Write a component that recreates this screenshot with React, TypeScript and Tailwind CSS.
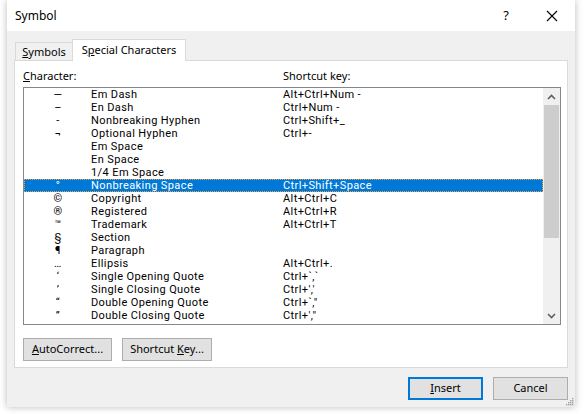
import React from 'react';

type Row = { ch: string; name: string; key: string };

const rows: Row[] = [
  { ch: '—', name: 'Em Dash', key: 'Alt+Ctrl+Num -' },
  { ch: '–', name: 'En Dash', key: 'Ctrl+Num -' },
  { ch: '-', name: 'Nonbreaking Hyphen', key: 'Ctrl+Shift+_' },
  { ch: '¬', name: 'Optional Hyphen', key: 'Ctrl+-' },
  { ch: '', name: 'Em Space', key: '' },
  { ch: '', name: 'En Space', key: '' },
  { ch: '', name: '1/4 Em Space', key: '' },
  { ch: '°', name: 'Nonbreaking Space', key: 'Ctrl+Shift+Space' },
  { ch: '©', name: 'Copyright', key: 'Alt+Ctrl+C' },
  { ch: '®', name: 'Registered', key: 'Alt+Ctrl+R' },
  { ch: '™', name: 'Trademark', key: 'Alt+Ctrl+T' },
  { ch: '§', name: 'Section', key: '' },
  { ch: '¶', name: 'Paragraph', key: '' },
  { ch: '…', name: 'Ellipsis', key: 'Alt+Ctrl+.' },
  { ch: '‘', name: 'Single Opening Quote', key: 'Ctrl+`,`' },
  { ch: '’', name: 'Single Closing Quote', key: "Ctrl+','" },
  { ch: '“', name: 'Double Opening Quote', key: 'Ctrl+`,"' },
  { ch: '”', name: 'Double Closing Quote', key: 'Ctrl+\',"' },
];

const SELECTED = 7;

function Chevron({ up }: { up: boolean }) {
  return (
    <svg width="9" height="6" viewBox="0 0 9 6">
      <path
        d={up ? 'M1 5 L4.5 1.5 L8 5' : 'M1 1 L4.5 4.5 L8 1'}
        fill="none"
        stroke="#606060"
        strokeWidth="1.6"
      />
    </svg>
  );
}

function Btn({ children, w, primary }: { children: React.ReactNode; w: string; primary?: boolean }) {
  return (
    <button
      className={`${w} h-[23px] flex items-center justify-center bg-[#e1e1e1] text-black ${
        primary ? 'border-2 border-[#0078d7]' : 'border border-[#adadad]'
      }`}
    >
      {children}
    </button>
  );
}

export default function App() {
  return (
    <div
      className="w-[584px] h-[414px] bg-white overflow-hidden text-[11px] text-black"
      style={{ fontFamily: '"Segoe UI", "Noto Sans", sans-serif' }}
    >
      <div className="relative ml-[7px] w-[568px] h-[407px] flex flex-col bg-[#f0f0f0] shadow-[0_0_7px_rgba(0,0,0,0.28)]">
        {/* title bar */}
        <div className="h-[31px] bg-white flex items-center pl-[8px]">
          <span className="flex-1 leading-none text-[12px]">Symbol</span>
          <span className="w-[46px] text-center text-[13px] leading-none">?</span>
          <span className="w-[46px] flex justify-center">
            <svg width="12" height="12" viewBox="0 0 12 12">
              <path d="M1 1 L11 11 M11 1 L1 11" stroke="#000" strokeWidth="1.1" />
            </svg>
          </span>
        </div>

        <div className="px-[7px] pt-[7px] flex flex-col">
          {/* tabs */}
          <div className="flex items-end h-[22px] pl-[1px]">
            <div className="h-[19px] w-[58px] flex items-center justify-center border border-b-0 border-[#d9d9d9] bg-[#f0f0f0] mb-[-1px]">
              <span>
                <span className="underline">S</span>ymbols
              </span>
            </div>
            <div className="relative z-10 h-[22px] w-[114px] flex items-center justify-center border border-b-0 border-[#d9d9d9] bg-white mb-[-1px] ml-[-1px]">
              <span>
                S<span className="underline">p</span>ecial Characters
              </span>
            </div>
          </div>

          {/* panel */}
          <div className="h-[308px] bg-white border border-[#d9d9d9] px-[8px] pt-[7px] flex flex-col">
            <div className="h-[16px] leading-[16px] mb-[3px] flex">
              <span className="w-[260px]">
                <span className="underline">C</span>haracter:
              </span>
              <span>Shortcut key:</span>
            </div>

            <div
              className="h-[238px] w-[538px] border border-[#828790] flex text-[11px] tracking-[0.4px]"
              style={{ fontFamily: 'Roboto, "Noto Sans", sans-serif' }}
            >
              <div className="flex-1 flex flex-col">
                {rows.map((r, i) => {
                  const sel = i === SELECTED;
                  return (
                    <div
                      key={r.name}
                      className={`h-[13px] flex items-center leading-[13px] border ${
                        sel ? 'bg-[#0078d7] text-white border-dotted border-[#e8a33c]' : 'border-transparent'
                      }`}
                    >
                      <span className="w-[66px] text-center">{r.ch}</span>
                      <span className="w-[192px]">{r.name}</span>
                      <span>{r.key}</span>
                    </div>
                  );
                })}
              </div>
              <div className="w-[17px] flex flex-col bg-[#f0f0f0]">
                <div className="h-[17px] flex items-center justify-center">
                  <Chevron up />
                </div>
                <div className="h-[133px] mx-[1px] bg-[#cdcdcd]" />
                <div className="flex-1" />
                <div className="h-[17px] flex items-center justify-center">
                  <Chevron up={false} />
                </div>
              </div>
            </div>

            <div className="flex gap-[10px] mt-[13px]">
              <Btn w="w-[89px]">
                <span>
                  <span className="underline">A</span>utoCorrect...
                </span>
              </Btn>
              <Btn w="w-[90px]">
                <span>
                  Shortcut <span className="underline">K</span>ey...
                </span>
              </Btn>
            </div>
          </div>

          {/* bottom buttons */}
          <div className="flex justify-end gap-[10px] mt-[9px]">
            <Btn w="w-[75px]" primary>
              <span>
                <span className="underline">I</span>nsert
              </span>
            </Btn>
            <Btn w="w-[75px]">Cancel</Btn>
          </div>
        </div>

        {/* resize grip */}
        <svg className="absolute right-[1px] bottom-[1px]" width="10" height="10" viewBox="0 0 10 10">
          <g fill="#a0a0a0">
            <rect x="8" y="2" width="1.4" height="1.4" />
            <rect x="6" y="4" width="1.4" height="1.4" />
            <rect x="8" y="4" width="1.4" height="1.4" />
            <rect x="4" y="6" width="1.4" height="1.4" />
            <rect x="6" y="6" width="1.4" height="1.4" />
            <rect x="8" y="6" width="1.4" height="1.4" />
            <rect x="2" y="8" width="1.4" height="1.4" />
            <rect x="4" y="8" width="1.4" height="1.4" />
            <rect x="6" y="8" width="1.4" height="1.4" />
            <rect x="8" y="8" width="1.4" height="1.4" />
          </g>
        </svg>
      </div>
    </div>
  );
}
